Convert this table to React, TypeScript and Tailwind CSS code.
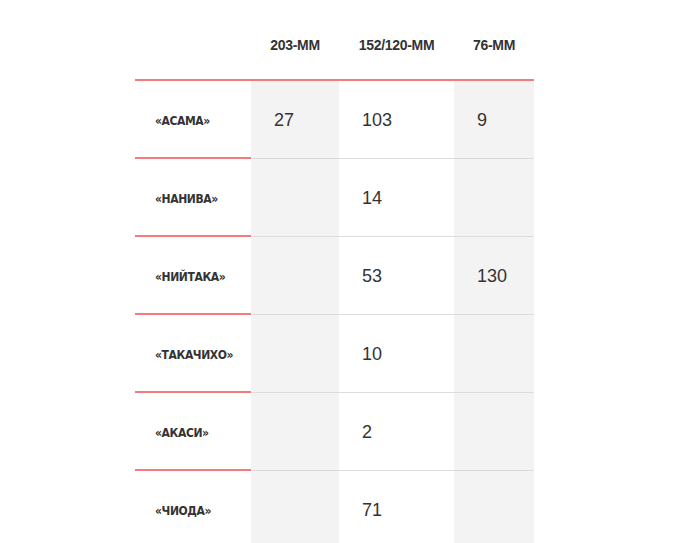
import React from 'react'

// ── Data ──────────────────────────────────────────────────────────────────────
const headers = ['203-ММ', '152/120-ММ', '76-ММ']

const rows: { name: string; vals: string[] }[] = [
  { name: '«АСАМА»',    vals: ['27', '103', '9'] },
  { name: '«НАНИВА»',   vals: ['', '14', ''] },
  { name: '«НИЙТАКА»',  vals: ['', '53', '130'] },
  { name: '«ТАКАЧИХО»', vals: ['', '10', ''] },
  { name: '«АКАСИ»',    vals: ['', '2', ''] },
  { name: '«ЧИОДА»',    vals: ['', '71', ''] },
]

const colW  = ['w-[88px]', 'w-[115px]', 'w-[80px]']
const colBg = ['bg-[#f3f3f3]', 'bg-white', 'bg-[#f3f3f3]']

export default function App() {
  return (
    <div className="w-[697px] h-[543px] overflow-hidden bg-white text-[#333]"
      style={{ fontFamily: '"Liberation Sans", Arial, sans-serif' }}>
      <div className="ml-[135px] w-[399px]">
        {/* header */}
        <div className="flex h-[79px] pt-[36px]">
          <div className="w-[116px]" />
          {headers.map((h, i) => (
            <div key={h} className={`${colW[i]} text-center text-[14px] leading-[18px] font-bold tracking-[-0.3px]`}>
              {h}
            </div>
          ))}
        </div>
        <div className="h-[2px] bg-[#f47b7b]" />

        {/* body */}
        {rows.map(r => (
          <div key={r.name} className="flex h-[78px]">
            <div className="w-[116px] flex items-center pl-5 pt-[3px] border-b-2 border-[#f47b7b] text-[12px] font-bold font-stretch-condensed tracking-[-0.4px]"
              style={{ fontFamily: '"DejaVu Sans", sans-serif' }}>
              {r.name}
            </div>
            {r.vals.map((v, i) => (
              <div key={i} className={`${colW[i]} ${colBg[i]} flex items-center pl-[23px] pt-[2px] border-b border-[#dcdcdc] text-[18px]`}>
                {v}
              </div>
            ))}
          </div>
        ))}
      </div>
    </div>
  )
}
